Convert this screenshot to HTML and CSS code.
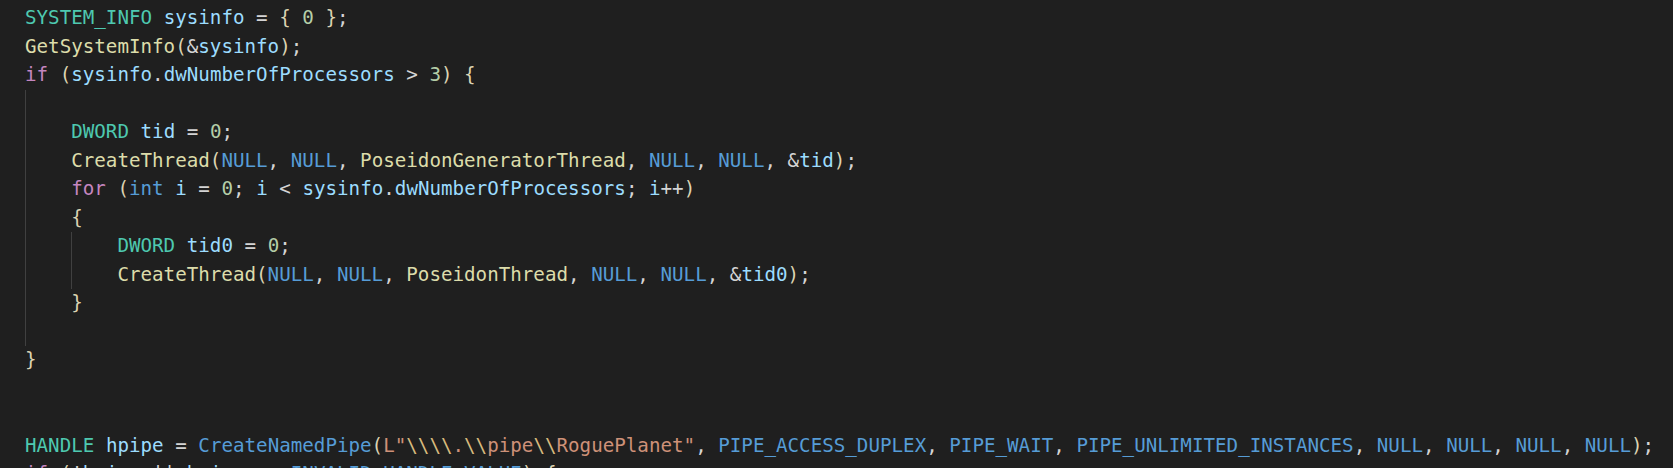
FILE: index.html
```html
<!DOCTYPE html>
<html lang="en">
<head>
<meta charset="utf-8">
<title>Code</title>
<link rel="stylesheet" href="styles.css">
</head>
<body>
<div class="editor">
  <div class="line"><span class="br">{</span></div>
  <div class="line"><span class="ty">SYSTEM_INFO</span> <span class="va">sysinfo</span> <span class="op">=</span> <span class="br">{</span> <span class="nu">0</span> <span class="br">}</span><span class="op">;</span></div>
  <div class="line"><span class="fn">GetSystemInfo</span><span class="br">(</span><span class="op">&amp;</span><span class="va">sysinfo</span><span class="br">)</span><span class="op">;</span></div>
  <div class="line"><span class="kw">if</span> <span class="br">(</span><span class="va">sysinfo</span><span class="op">.</span><span class="va">dwNumberOfProcessors</span> <span class="op">&gt;</span> <span class="nu">3</span><span class="br">)</span> <span class="br">{</span></div>
  <div class="block">
    <div class="line in"></div>
    <div class="line in"><span class="ty">DWORD</span> <span class="va">tid</span> <span class="op">=</span> <span class="nu">0</span><span class="op">;</span></div>
    <div class="line in"><span class="fn">CreateThread</span><span class="br">(</span><span class="mc">NULL</span><span class="op">,</span> <span class="mc">NULL</span><span class="op">,</span> <span class="fn">PoseidonGeneratorThread</span><span class="op">,</span> <span class="mc">NULL</span><span class="op">,</span> <span class="mc">NULL</span><span class="op">,</span> <span class="op">&amp;</span><span class="va">tid</span><span class="br">)</span><span class="op">;</span></div>
    <div class="line in"><span class="kw">for</span> <span class="br">(</span><span class="st">int</span> <span class="va">i</span> <span class="op">=</span> <span class="nu">0</span><span class="op">;</span> <span class="va">i</span> <span class="op">&lt;</span> <span class="va">sysinfo</span><span class="op">.</span><span class="va">dwNumberOfProcessors</span><span class="op">;</span> <span class="va">i</span><span class="op">++</span><span class="br">)</span></div>
    <div class="line in"><span class="br">{</span></div>
    <div class="block nested">
      <div class="line in"><span class="ty">DWORD</span> <span class="va">tid0</span> <span class="op">=</span> <span class="nu">0</span><span class="op">;</span></div>
      <div class="line in"><span class="fn">CreateThread</span><span class="br">(</span><span class="mc">NULL</span><span class="op">,</span> <span class="mc">NULL</span><span class="op">,</span> <span class="fn">PoseidonThread</span><span class="op">,</span> <span class="mc">NULL</span><span class="op">,</span> <span class="mc">NULL</span><span class="op">,</span> <span class="op">&amp;</span><span class="va">tid0</span><span class="br">)</span><span class="op">;</span></div>
    </div>
    <div class="line in"><span class="br">}</span></div>
    <div class="line in"></div>
  </div>
  <div class="line"><span class="br">}</span></div>
  <div class="line"></div>
  <div class="line"></div>
  <div class="line"><span class="ty">HANDLE</span> <span class="va">hpipe</span> <span class="op">=</span> <span class="mc">CreateNamedPipe</span><span class="br">(</span><span class="s">L"</span><span class="es">\\\\</span><span class="s">.</span><span class="es">\\</span><span class="s">pipe</span><span class="es">\\</span><span class="s">RoguePlanet"</span><span class="op">,</span> <span class="mc">PIPE_ACCESS_DUPLEX</span><span class="op">,</span> <span class="mc">PIPE_WAIT</span><span class="op">,</span> <span class="mc">PIPE_UNLIMITED_INSTANCES</span><span class="op">,</span> <span class="mc">NULL</span><span class="op">,</span> <span class="mc">NULL</span><span class="op">,</span> <span class="mc">NULL</span><span class="op">,</span> <span class="mc">NULL</span><span class="br">)</span><span class="op">;</span></div>
  <div class="line"><span class="kw">if</span> <span class="br">(</span><span class="op">!</span><span class="va">hpipe</span> <span class="op">||</span> <span class="va">hpipe</span> <span class="op">==</span> <span class="mc">INVALID_HANDLE_VALUE</span><span class="br">)</span> <span class="br">{</span></div>
</div>
</body>
</html>
```

FILE: styles.css
```css
html, body {
  margin: 0;
  padding: 0;
  background: #1f1f1f;
  overflow: hidden;
}

.editor {
  margin-top: -24.4px;
  padding-left: 25px;
  font-family: "DejaVu Sans Mono", "Liberation Mono", monospace;
  font-size: 19.2px;
  line-height: 28.5px;
  color: #cccccc;
}

.line {
  height: 28.5px;
  white-space: pre;
}

.block {
  border-left: 1px solid #404040;
}

.block > .line.in {
  padding-left: calc(4ch - 1px);
}

.block.nested {
  margin-left: calc(4ch - 1px);
}

.ty { color: #4ec9b0; }
.va { color: #9cdcfe; }
.fn { color: #dcdcaa; }
.kw { color: #c586c0; }
.st { color: #569cd6; }
.mc { color: #569cd6; }
.nu { color: #b5cea8; }
.op { color: #d4d4d4; }
.s  { color: #ce9178; }
.es { color: #d7ba7d; }
.br { color: #dcd3b2; }
```
